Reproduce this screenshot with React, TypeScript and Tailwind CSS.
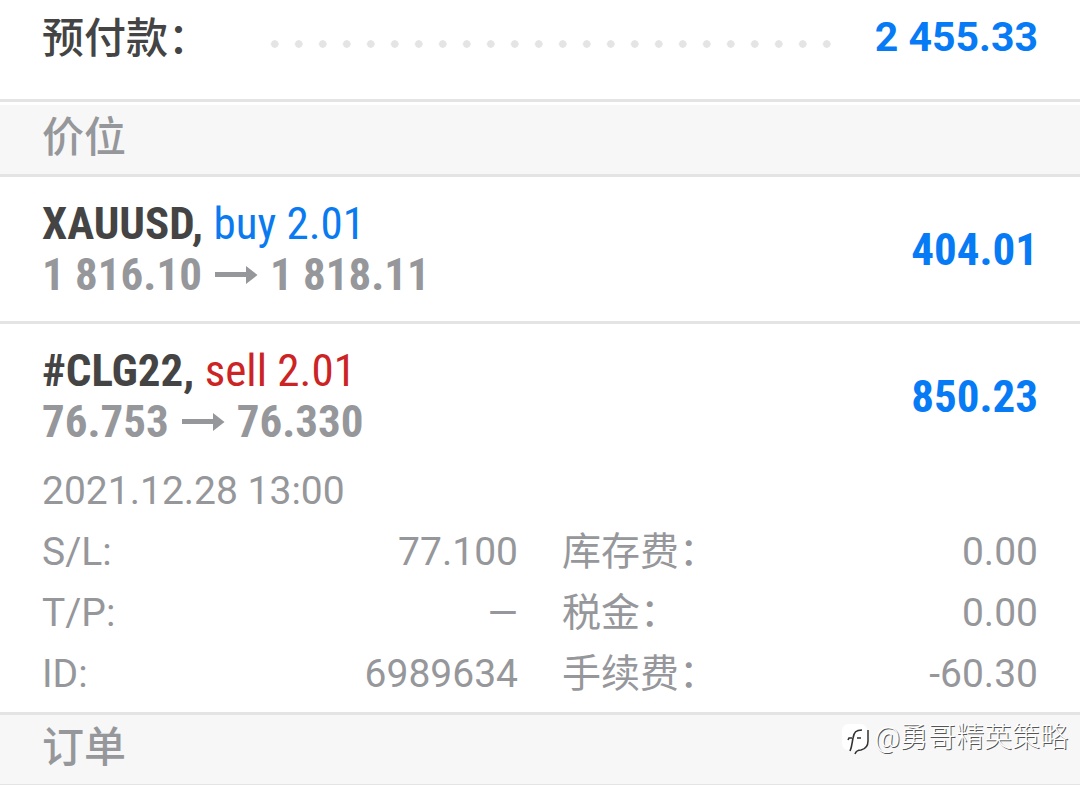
type Position = {
  symbol: string;
  side: "buy" | "sell";
  volume: string;
  open: string;
  current: string;
  profit: string;
};

const gold: Position = {
  symbol: "XAUUSD",
  side: "buy",
  volume: "2.01",
  open: "1 816.10",
  current: "1 818.11",
  profit: "404.01",
};

const oil: Position = {
  symbol: "#CLG22",
  side: "sell",
  volume: "2.01",
  open: "76.753",
  current: "76.330",
  profit: "850.23",
};

const orderDetails = [
  { label: "S/L:", value: "77.100" },
  { label: "库存费：", value: "0.00" },
  { label: "T/P:", value: "—" },
  { label: "税金：", value: "0.00" },
  { label: "ID:", value: "6989634" },
  { label: "手续费：", value: "-60.30" },
];

function Arrow() {
  return (
    <svg viewBox="0 0 44 20" className="mx-3 h-5 w-11 shrink-0 fill-current" aria-hidden="true">
      <path d="M1 7h31V1l11.5 9L32 19v-7H1z" />
    </svg>
  );
}

function PositionSummary({ position }: { position: Position }) {
  const sideColor = position.side === "buy" ? "text-[#0a7af0]" : "text-[#cc2424]";
  return (
    <div className="flex items-center justify-between px-[42px] pt-[21px] font-['Roboto_Condensed','Roboto',sans-serif] text-[45px] leading-[51px]">
      <div>
        <h3 className="font-bold text-[#444444]">
          {position.symbol}, <span className={`font-normal ${sideColor}`}>{position.side} {position.volume}</span>
        </h3>
        <p className="flex items-center font-bold text-[#96979b]">
          <span>{position.open}</span>
          <Arrow />
          <span>{position.current}</span>
        </p>
      </div>
      <strong className="font-bold text-[#077af5]">{position.profit}</strong>
    </div>
  );
}

function SectionTitle({ children }: { children: string }) {
  return (
    <h2 className="h-[69px] bg-[#f7f7f7] px-[42px] text-[42px] leading-[66px] font-medium text-[#96979b]">
      {children}
    </h2>
  );
}

function Watermark() {
  return (
    <div className="absolute right-3 bottom-7 flex items-center gap-1 text-[28px] leading-9 font-light text-white [text-shadow:1px_1px_0_#555]">
      <svg viewBox="0 0 30 34" className="h-[34px] w-[30px]" fill="none" aria-hidden="true">
        <path d="M9 3h11c5 0 7 3 7 8v9c0 6-3 8-8 9H9c-5 0-7-3-7-8V11c0-5 2-8 7-8z" fill="#fff" />
        <path d="M10 30c2-4 2-8 3-13 1-6 3-8 9-8M8 19l1-2h3M17 17h4" stroke="#333" strokeWidth="1.6" />
        <path d="M28 9v11c0 6-3 8-7 9-3 0-5 1-6 4" stroke="#333" strokeWidth="1.5" />
      </svg>
      <span>@勇哥精英策略</span>
    </div>
  );
}

export default function App() {
  return (
    <main className="bg-white font-['Roboto','Noto_Sans_CJK_SC',sans-serif]">
      <div className="flex h-[102px] items-start border-b-[3px] border-[#e4e4e4] px-[42px] pt-2 text-[42px] leading-[60px]">
        <span className="leading-[62px] font-medium text-[#444444]">预付款：</span>
        <span className="mt-6 ml-12 h-6 flex-1 bg-[radial-gradient(circle_at_12px_12px,#e4e4e4_3.5px,transparent_4px)] bg-[length:24px_24px] bg-right" />
        <strong className="ml-9 text-[41px] leading-[58px] font-bold text-[#077af5]">2 455.33</strong>
      </div>
      <section className="mt-[3px]">
        <SectionTitle>价位</SectionTitle>
        <article className="h-[150px] border-y-[3px] border-[#e4e4e4]">
          <PositionSummary position={gold} />
        </article>
        <article className="border-b-[3px] border-[#e4e4e4] pb-[7px] text-[39px] leading-[61px] text-[#96979b]">
          <PositionSummary position={oil} />
          <div className="px-[42px] pt-[14px]">
            <time className="block" dateTime="2021-12-28T13:00">2021.12.28 13:00</time>
            <dl className="grid grid-cols-2 gap-x-11">
              {orderDetails.map((detail) => (
                <div key={detail.label} className="flex h-[61px] justify-between">
                  <dt>{detail.label}</dt>
                  <dd>{detail.value}</dd>
                </div>
              ))}
            </dl>
          </div>
        </article>
      </section>
      <section className="relative border-b border-[#e4e4e4]">
        <SectionTitle>订单</SectionTitle>
        <Watermark />
      </section>
    </main>
  );
}
